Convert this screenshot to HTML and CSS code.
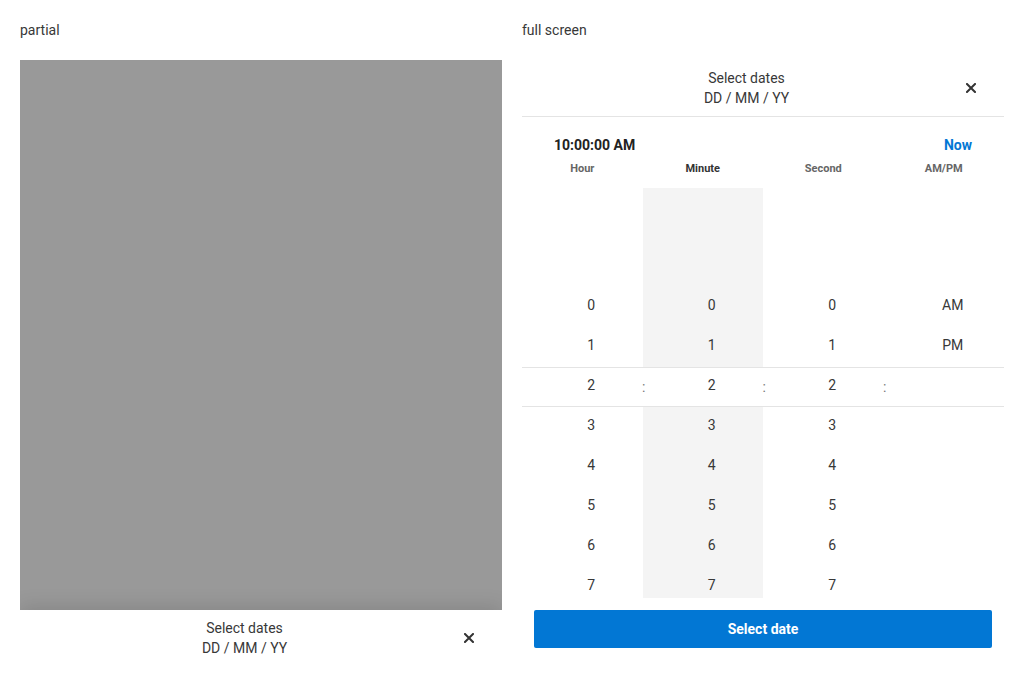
FILE: index.html
```html
<!DOCTYPE html>
<html>
<head>
<meta charset="utf-8">
<link rel="stylesheet" href="styles.css">
</head>
<body>
<div class="page">
  <section class="demo">
    <div class="label">partial</div>
    <div class="frame partial">
      <div class="backdrop"></div>
      <div class="sheet-header">
        <div class="title"><div>Select dates</div><div>DD / MM / YY</div></div>
        <button class="close" aria-label="Close"><svg width="10" height="10" viewBox="0 0 10 10"><path d="M1 1L9 9M9 1L1 9" stroke="#333" stroke-width="2" stroke-linecap="square" fill="none"/></svg></button>
      </div>
    </div>
  </section>
  <section class="demo">
    <div class="label">full screen</div>
    <div class="frame full">
      <div class="sheet-header bordered">
        <div class="title"><div>Select dates</div><div>DD / MM / YY</div></div>
        <button class="close" aria-label="Close"><svg width="10" height="10" viewBox="0 0 10 10"><path d="M1 1L9 9M9 1L1 9" stroke="#333" stroke-width="2" stroke-linecap="square" fill="none"/></svg></button>
      </div>
      <div class="time-row">
        <span class="time">10:00:00 AM</span>
        <span class="now">Now</span>
      </div>
      <div class="col-labels">
        <span>Hour</span><span class="active">Minute</span><span>Second</span><span>AM/PM</span>
      </div>
      <div class="wheel">
        <div class="band"><span>:</span><span>:</span><span>:</span><span></span></div>
        <div class="col"><div class="cell">0</div><div class="cell">1</div><div class="cell">2</div><div class="cell">3</div><div class="cell">4</div><div class="cell">5</div><div class="cell">6</div><div class="cell">7</div></div>
        <div class="col active"><div class="cell">0</div><div class="cell">1</div><div class="cell">2</div><div class="cell">3</div><div class="cell">4</div><div class="cell">5</div><div class="cell">6</div><div class="cell">7</div></div>
        <div class="col"><div class="cell">0</div><div class="cell">1</div><div class="cell">2</div><div class="cell">3</div><div class="cell">4</div><div class="cell">5</div><div class="cell">6</div><div class="cell">7</div></div>
        <div class="col"><div class="cell">AM</div><div class="cell">PM</div></div>
      </div>
      <button class="primary">Select date</button>
    </div>
  </section>
</div>
</body>
</html>
```
FILE: styles.css
```css
html, body {
  margin: 0;
  padding: 0;
  background: #fff;
}
body {
  font-family: Roboto, "Liberation Sans", sans-serif;
  font-size: 14px;
  line-height: 20px;
  color: #383838;
}
.page {
  display: flex;
  gap: 20px;
  padding: 20px 20px 0;
  height: 680px;
  box-sizing: border-box;
}
.demo {
  flex: 1;
  display: flex;
  flex-direction: column;
  min-width: 0;
}
.label {
  height: 20px;
}
.frame {
  margin-top: 20px;
  flex: 1;
  display: flex;
  flex-direction: column;
  overflow: hidden;
}
.backdrop {
  flex: 1;
  background: #999;
}
.sheet-header {
  display: flex;
  align-items: center;
  padding: 8px 17px 8px 16px;
  background: #fff;
  box-shadow: 0 -4px 18px rgba(0, 0, 0, 0.12);
}
.partial .sheet-header {
  height: 70px;
  box-sizing: border-box;
  align-items: flex-start;
}
.partial .sheet-header .close {
  margin-top: 10px;
}
.sheet-header.bordered {
  box-shadow: none;
  border-bottom: 1px solid #e4e4e4;
  box-sizing: content-box;
  padding-top: 8px;
  padding-bottom: 8px;
  height: 40px;
}
.title {
  flex: 1;
  text-align: center;
}
.close {
  width: 32px;
  height: 20px;
  border: 0;
  background: none;
  padding: 0;
  display: flex;
  align-items: center;
  justify-content: center;
}
.time-row {
  display: flex;
  justify-content: space-between;
  padding: 0 32px;
  margin-top: 18px;
  font-weight: 700;
  color: #222;
}
.now {
  color: #0277d4;
}
.col-labels {
  display: grid;
  grid-template-columns: repeat(4, 1fr);
  margin-top: 6px;
  font-size: 11px;
  line-height: 16px;
  font-weight: 700;
  color: #666;
  text-align: center;
}
.col-labels .active {
  color: #333;
}
.wheel {
  position: relative;
  margin-top: 11px;
  height: 410px;
  overflow: hidden;
  display: grid;
  grid-template-columns: repeat(4, 1fr);
}
.band {
  position: absolute;
  left: 0;
  right: 0;
  top: 179px;
  height: 40px;
  box-sizing: border-box;
  border-top: 1px solid #e4e4e4;
  border-bottom: 1px solid #e4e4e4;
  background: #fff;
  z-index: 1;
  display: grid;
  grid-template-columns: repeat(4, 1fr);
  align-items: center;
  color: #777;
}
.band span {
  text-align: right;
  margin-right: -3px;
  line-height: 38px;
}
.col {
  padding-top: 97px;
  padding-left: 18px;
}
.col.active {
  background: #f4f4f4;
}
.cell {
  position: relative;
  z-index: 2;
  height: 40px;
  line-height: 40px;
  text-align: center;
}
.primary {
  margin: 12px 12px 0;
  height: 38px;
  border: 0;
  border-radius: 2px;
  background: #0277d4;
  color: #fff;
  font-family: inherit;
  font-size: 14px;
  font-weight: 700;
}
```
